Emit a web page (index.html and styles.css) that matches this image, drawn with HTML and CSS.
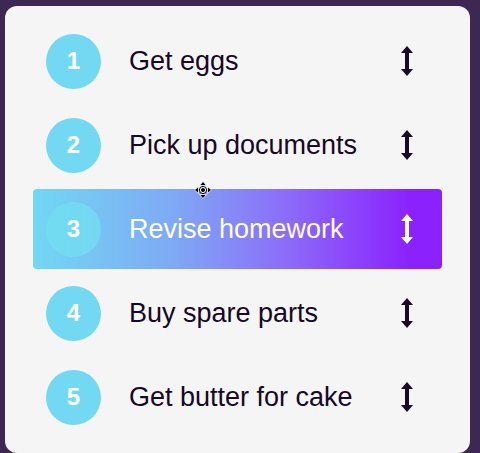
FILE: index.html
```html
<!DOCTYPE html>
<html>
<head>
<meta charset="utf-8">
<link rel="stylesheet" href="styles.css">
</head>
<body>
<div class="card">
  <ul class="list">
    <li class="item"><span class="num">1</span><span class="label">Get eggs</span><svg class="handle" viewBox="0 0 14 30"><path d="M7 0 L13 7 L9 7 L9 23 L13 23 L7 30 L1 23 L5 23 L5 7 L1 7 Z"/></svg></li>
    <li class="item"><span class="num">2</span><span class="label">Pick up documents</span><svg class="handle" viewBox="0 0 14 30"><path d="M7 0 L13 7 L9 7 L9 23 L13 23 L7 30 L1 23 L5 23 L5 7 L1 7 Z"/></svg></li>
    <li class="item active"><span class="num">3</span><span class="label">Revise homework</span><svg class="handle" viewBox="0 0 14 30"><path d="M7 0 L13 7 L9 7 L9 23 L13 23 L7 30 L1 23 L5 23 L5 7 L1 7 Z"/></svg>
      <svg class="cursor" viewBox="0 0 18 18"><path d="M9 0.5 L12.5 4.5 L5.5 4.5 Z M9 17.5 L12.5 13.5 L5.5 13.5 Z M0.5 9 L4.5 5.5 L4.5 12.5 Z M17.5 9 L13.5 5.5 L13.5 12.5 Z" fill="#000" stroke="#fff" stroke-width="0.8"/><circle cx="9" cy="9" r="3.6" fill="#fff" stroke="#000" stroke-width="1"/><circle cx="9" cy="9" r="2" fill="#000"/></svg>
    </li>
    <li class="item"><span class="num">4</span><span class="label">Buy spare parts</span><svg class="handle" viewBox="0 0 14 30"><path d="M7 0 L13 7 L9 7 L9 23 L13 23 L7 30 L1 23 L5 23 L5 7 L1 7 Z"/></svg></li>
    <li class="item"><span class="num">5</span><span class="label">Get butter for cake</span><svg class="handle" viewBox="0 0 14 30"><path d="M7 0 L13 7 L9 7 L9 23 L13 23 L7 30 L1 23 L5 23 L5 7 L1 7 Z"/></svg></li>
  </ul>
</div>
</body>
</html>
```
FILE: styles.css
```css
html, body {
  margin: 0;
  padding: 0;
  background: #3e2853;
  height: 453px;
  overflow: hidden;
}
body {
  padding: 6px 10px 0 5px;
  box-sizing: border-box;
  font-family: "Liberation Sans", Arial, sans-serif;
}
.card {
  width: 465px;
  height: 447px;
  background: #f5f5f5;
  border-radius: 12px;
  box-sizing: border-box;
  padding: 15px 28px;
}
.list {
  list-style: none;
  margin: 0;
  padding: 0;
  display: flex;
  flex-direction: column;
  gap: 4px;
}
.item {
  position: relative;
  height: 80px;
  display: flex;
  align-items: center;
  padding: 0 0 0 13px;
  border-radius: 4px;
  color: #160826;
}
.num {
  width: 55px;
  height: 55px;
  border-radius: 50%;
  background: #73d9f2;
  color: #fff;
  font-weight: bold;
  font-size: 24px;
  display: flex;
  align-items: center;
  justify-content: center;
  flex: none;
}
.label {
  margin-left: 28px;
  font-size: 27px;
  flex: 1;
}
.handle {
  width: 14px;
  height: 30px;
  margin-right: 28px;
  fill: #1a0a26;
  flex: none;
}
.active {
  background: linear-gradient(90deg, #72d8f2 0%, #7fa8f5 35%, #8c6cf8 62%, #8b22fe 92%, #8b22fe 100%);
  color: #fff;
}
.active .num {
  background: rgba(115, 220, 242, 0.85);
}
.active .handle {
  fill: #fff;
}
.cursor {
  position: absolute;
  left: 161px;
  top: -8px;
  width: 18px;
  height: 18px;
}
```
